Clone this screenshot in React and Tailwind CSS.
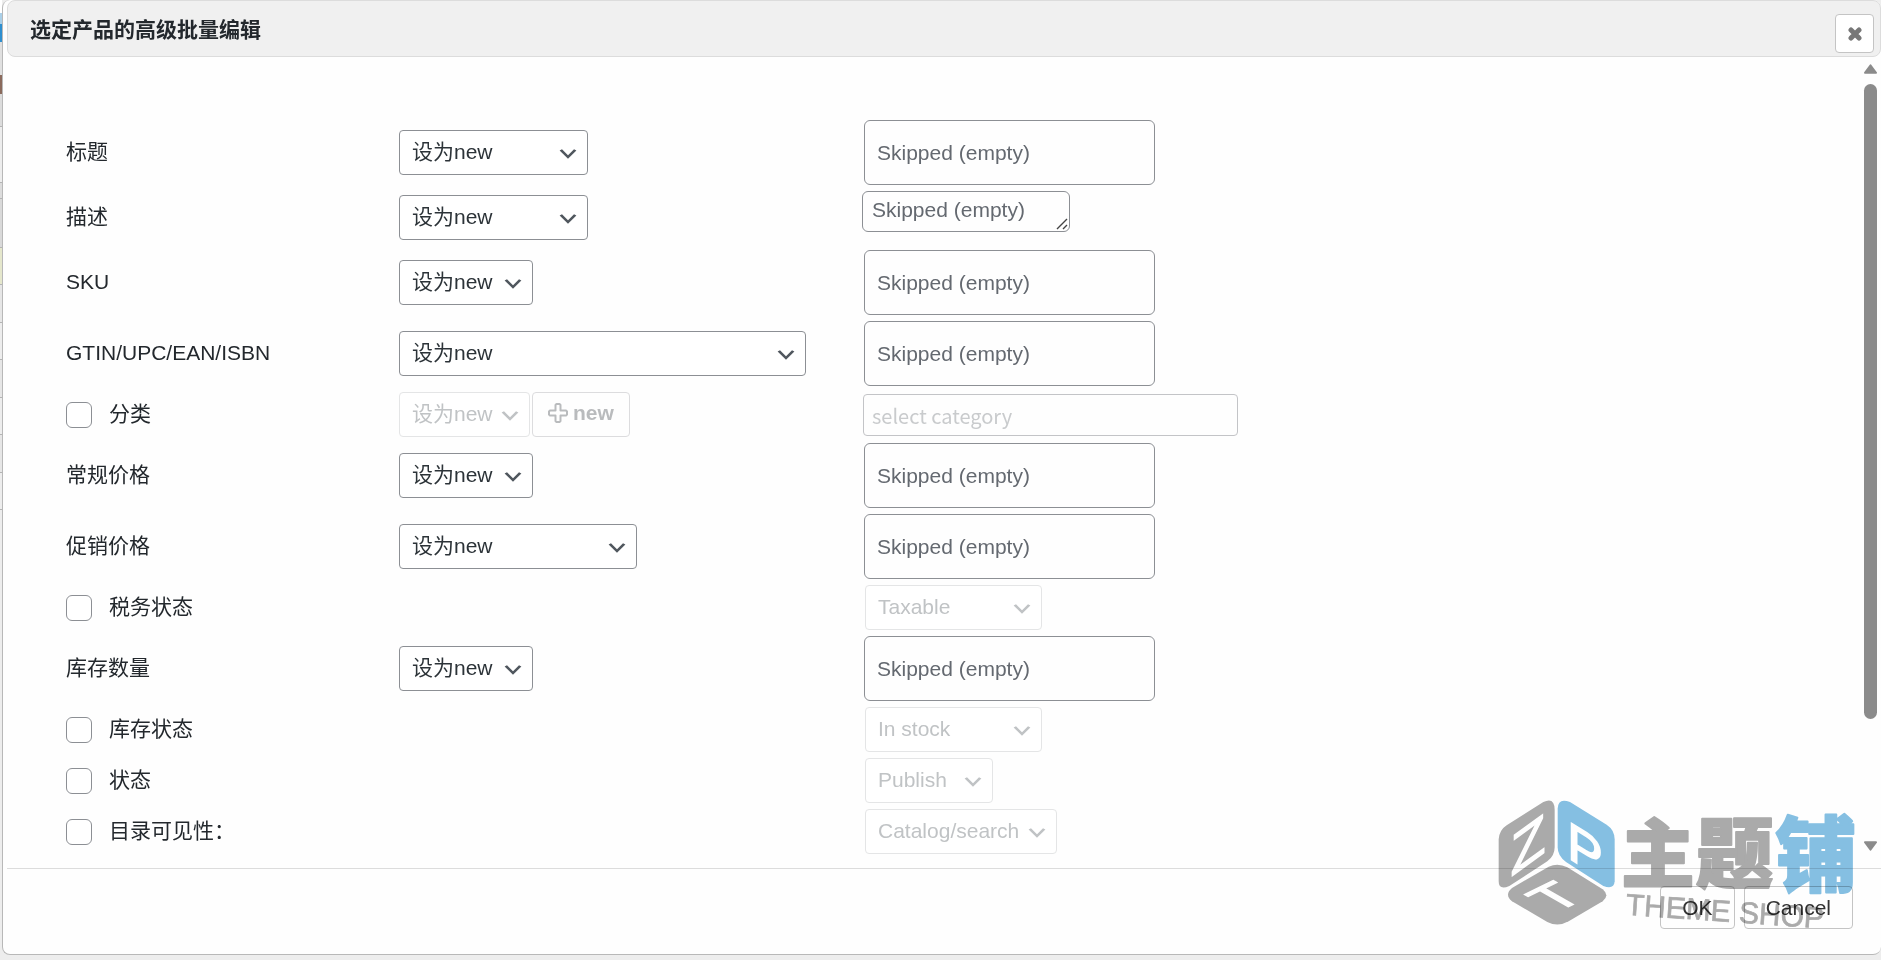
import React, { useState } from 'react';

const fields = [
  { id: 'title', label: '标题', modeWidth: 'w-[189px]', type: 'text' },
  { id: 'description', label: '描述', modeWidth: 'w-[189px]', type: 'textarea' },
  { id: 'sku', label: 'SKU', modeWidth: 'w-[134px]', type: 'text' },
  { id: 'gtin', label: 'GTIN/UPC/EAN/ISBN', modeWidth: 'w-[407px]', type: 'text' },
  { id: 'category', label: '分类', toggle: true, modeWidth: 'w-[131px]', type: 'category' },
  { id: 'regular-price', label: '常规价格', modeWidth: 'w-[134px]', type: 'text' },
  { id: 'sale-price', label: '促销价格', modeWidth: 'w-[238px]', type: 'text' },
  { id: 'tax-status', label: '税务状态', toggle: true, type: 'select', value: 'Taxable', width: 'w-[177px]' },
  { id: 'stock-quantity', label: '库存数量', modeWidth: 'w-[134px]', type: 'text' },
  { id: 'stock-status', label: '库存状态', toggle: true, type: 'select', value: 'In stock', width: 'w-[177px]' },
  { id: 'status', label: '状态', toggle: true, type: 'select', value: 'Publish', width: 'w-[128px]' },
  { id: 'visibility', label: '目录可见性：', toggle: true, type: 'select', value: 'Catalog/search', width: 'w-[192px]' },
];

// slices of the products page still visible left of the dialog
const pageStrip = [
  'h-[13px] bg-white',
  'h-[11px] bg-[#a9cfe8]',
  'h-[18px] bg-[#2f8fcf]',
  'h-[33px] bg-[#e0e0e0]',
  'h-[19px] bg-[#8a6a5c]',
  'h-[33px] bg-[#dcdcdc] border-b border-[#b4b4b4]',
  'h-[56px] bg-[#ededed] border-b border-[#b4b4b4]',
  'h-[16px] bg-[#dcdcdc] border-b border-[#b4b4b4]',
  'h-[49px] bg-[#d9d9d9] border-b border-[#b4b4b4]',
  'h-[37px] bg-[#e5e7cc] border-b border-[#b4b4b4]',
  'h-[38px] bg-[#e6e6e6] border-b border-[#b4b4b4]',
  'h-[37px] bg-[#ededed] border-b border-[#b4b4b4]',
  'h-[38px] bg-[#e6e6e6] border-b border-[#b4b4b4]',
  'h-[37px] bg-[#ededed] border-b border-[#b4b4b4]',
  'h-[38px] bg-[#e6e6e6] border-b border-[#b4b4b4]',
  'h-[37px] bg-[#ededed] border-b border-[#b4b4b4]',
];

function SelectBox({ id, label, width, options, disabled }) {
  return (
    <div className={`relative ${width}`}>
      <select
        id={id}
        aria-label={label}
        disabled={disabled}
        className="block h-[45px] w-full appearance-none rounded border border-[#8c8f94] bg-white pb-0.5 pl-3 pr-6 text-[#2c3338] disabled:border-[#e4e5e6] disabled:text-[#c0c3c5] disabled:opacity-100"
      >
        {options.map((option) => (
          <option key={option}>{option}</option>
        ))}
      </select>
      <svg
        viewBox="0 0 20 20"
        className={`pointer-events-none absolute right-2 top-3 h-6 w-6 ${disabled ? 'fill-[#c0c3c5]' : 'fill-[#50575e]'}`}
      >
        <path d="M5 6l5 5 5-5 2 1-7 7-7-7 2-1z" />
      </svg>
    </div>
  );
}

function FieldValue({ field, disabled }) {
  if (field.type === 'textarea') {
    return (
      <div className="relative mb-3 w-[208px]">
        <textarea
          aria-label={field.label}
          rows={1}
          placeholder="Skipped (empty)"
          className="block h-[41px] w-full resize-none overflow-hidden rounded-md border border-[#8c8f94] px-[9px] py-1 leading-7 placeholder:text-[#646970]"
        />
        <svg viewBox="0 0 12 12" className="pointer-events-none absolute bottom-0.5 right-0.5 h-3 w-3 stroke-[#444]">
          <path strokeWidth="1.4" d="M1 11L11 1M7 11L11 7" />
        </svg>
      </div>
    );
  }
  if (field.type === 'category') {
    return (
      <input
        type="text"
        aria-label={field.label}
        disabled={disabled}
        placeholder="select category"
        className="ml-px block h-[42px] w-[375px] rounded border border-[#c3c4c7] px-2 pt-0.5 font-['Noto_Sans_CJK_SC',sans-serif] text-[20px] placeholder:text-[#c9cbcd]"
      />
    );
  }
  if (field.type === 'select') {
    return (
      <div className="ml-[3px]">
        <SelectBox label={field.label} width={field.width} options={[field.value]} disabled={disabled} />
      </div>
    );
  }
  return (
    <input
      type="text"
      aria-label={field.label}
      placeholder="Skipped (empty)"
      className="ml-0.5 block h-[65px] w-[291px] rounded-md border border-[#8c8f94] px-3 placeholder:text-[#646970]"
    />
  );
}

function FieldRow({ field }) {
  const [enabled, setEnabled] = useState(!field.toggle);

  return (
    <div className="grid grid-cols-[333px_463px_1fr] items-center py-[3px]">
      {field.toggle ? (
        <div className="flex items-center gap-[17px]">
          <input
            id={`${field.id}-toggle`}
            type="checkbox"
            checked={enabled}
            onChange={(e) => setEnabled(e.target.checked)}
            className="h-[26px] w-[26px] appearance-none rounded-md border border-[#8c8f94] bg-white checked:bg-[#3582c4]"
          />
          <label htmlFor={`${field.id}-toggle`} className="pb-0.5">
            {field.label}
          </label>
        </div>
      ) : (
        <label htmlFor={`${field.id}-mode`} className="pb-0.5">
          {field.label}
        </label>
      )}

      <div className="flex gap-0.5">
        {field.modeWidth && (
          <SelectBox
            id={`${field.id}-mode`}
            label={field.label}
            width={field.modeWidth}
            options={['设为new']}
            disabled={!enabled}
          />
        )}
        {field.type === 'category' && (
          <button
            type="button"
            disabled={!enabled}
            className="flex h-[45px] items-center gap-[5px] rounded border border-[#dcdcde] px-[15px] pb-1 font-bold text-[#b9bbbd]"
          >
            <svg viewBox="0 0 20 20" className="h-5 w-5 fill-none stroke-[#b9bbbd] stroke-2">
              <path
                strokeLinejoin="round"
                d="M8.5 1h3l1 1v5.500h5.500l1 1v3l-1 1H12.500V18l-1 1h-3l-1-1v-5.500H2l-1-1v-3l1-1h5.500V2z"
              />
            </svg>
            new
          </button>
        )}
      </div>

      <FieldValue field={field} disabled={!enabled} />
    </div>
  );
}

function ScrollTrack() {
  return (
    <div aria-hidden="true" className="mr-1 flex w-[13px] flex-col gap-2.5 pb-[17px] pt-[7px]">
      <svg viewBox="0 0 14 10" className="h-2.5 fill-[#8b8b8b] stroke-[#8b8b8b] stroke-2">
        <path strokeLinejoin="round" d="M7 1L13 9H1z" />
      </svg>
      <div className="flex flex-1 flex-col">
        <div className="flex-[85] rounded-full bg-[#8b8b8b]" />
        <div className="flex-[15]" />
      </div>
      <svg viewBox="0 0 14 10" className="h-2.5 fill-[#8b8b8b] stroke-[#8b8b8b] stroke-2">
        <path strokeLinejoin="round" d="M7 9L13 1H1z" />
      </svg>
    </div>
  );
}

function ShopLogo() {
  return (
    <svg
      viewBox="0 0 1098 420"
      className="pointer-events-none absolute bottom-[20px] right-[25px] h-[140px] w-[366px] overflow-visible mix-blend-multiply"
    >
      <path fill="#ababab" d="M26 136Q28 108 50 94L160 24Q194 8 194 48V160Q194 186 172 202L58 276Q26 290 26 262z" />
      <path fill="#86c0e3" d="M203 44Q204 10 240 24L350 92Q374 108 374 136V262Q372 288 340 276L228 204Q203 186 203 160z" />
      <path fill="#ababab" d="M66 282L176 218Q204 206 232 220L338 286Q360 304 338 322L236 382Q204 400 172 384L66 322Q42 302 66 282z" />
      {/* one letter on each face of the cube */}
      <g fill="#fff" stroke="#fff" strokeWidth="5" fontFamily="Liberation Sans, sans-serif">
        <text transform="translate(62 248) skewY(-36)" fontSize="170">Z</text>
        <text transform="translate(232 190) skewY(32)" fontSize="160">P</text>
        <text transform="matrix(.92 -.45 .84 .48 196 358)" fontSize="165">T</text>
      </g>
      <g fontFamily="Noto Sans CJK SC, sans-serif" fontWeight="900" strokeWidth="6" strokeLinejoin="round">
        <text x="394" y="262" fontSize="220" fill="#ababab" stroke="#ababab">主</text>
        <text x="618" y="264" fontSize="232" fill="#ababab" stroke="#ababab">题</text>
        <text x="856" y="272" fontSize="244" fill="#86c0e3" stroke="#86c0e3">铺</text>
      </g>
      <text
        transform="translate(406 362) rotate(4)"
        fontFamily="Liberation Sans, sans-serif"
        fontSize="90"
        fill="#ababab"
        stroke="#ababab"
        strokeWidth="2"
      >
        THEME SHOP
      </text>
    </svg>
  );
}

export default function App() {
  return (
    <div className="flex min-h-screen bg-[#ededed] font-['Liberation_Sans','Noto_Sans_CJK_SC',sans-serif] text-[21px] leading-[30px] text-[#23282d]">
      <div aria-hidden="true" className="w-0.5 shrink-0">
        {pageStrip.map((slice, i) => (
          <div key={i} className={slice} />
        ))}
      </div>

      <div
        role="dialog"
        aria-labelledby="dialog-title"
        className="relative flex flex-1 flex-col self-start rounded-lg border-b border-l border-[#b8b8b8] bg-[#fefefe] pl-1"
      >
        <header className="flex h-[57px] items-center justify-between rounded-lg border border-[#dcdcdc] bg-[#f0f0f0] pl-[22px] pr-1.5">
          <h1 id="dialog-title" className="pt-[3px] font-bold">
            选定产品的高级批量编辑
          </h1>
          <button
            type="button"
            aria-label="Close"
            className="mt-2.5 flex h-[39px] w-[39px] items-center justify-center rounded border border-[#c4c4c4] bg-white"
          >
            <svg viewBox="0 0 14 14" className="h-3.5 w-3.5 stroke-[#777]">
              <path strokeWidth="5" strokeLinecap="round" d="M3 3L11 11M11 3L3 11" />
            </svg>
          </button>
        </header>

        <div className="flex">
          <form className="flex-1 pb-[11px] pl-[59px] pt-[60px]">
            {fields.map((field) => (
              <FieldRow key={field.id} field={field} />
            ))}
          </form>
          <ScrollTrack />
        </div>

        <footer className="flex justify-end gap-[9px] border-t border-[#dcdcdc] pb-[25px] pr-7 pt-[17px] text-[#333]">
          <button type="button" className="h-[43px] rounded border border-[#c4c4c4] px-[21px]">
            OK
          </button>
          <button type="button" className="h-[43px] rounded border border-[#c4c4c4] px-[21px]">
            Cancel
          </button>
        </footer>

        <ShopLogo />
      </div>
    </div>
  );
}
